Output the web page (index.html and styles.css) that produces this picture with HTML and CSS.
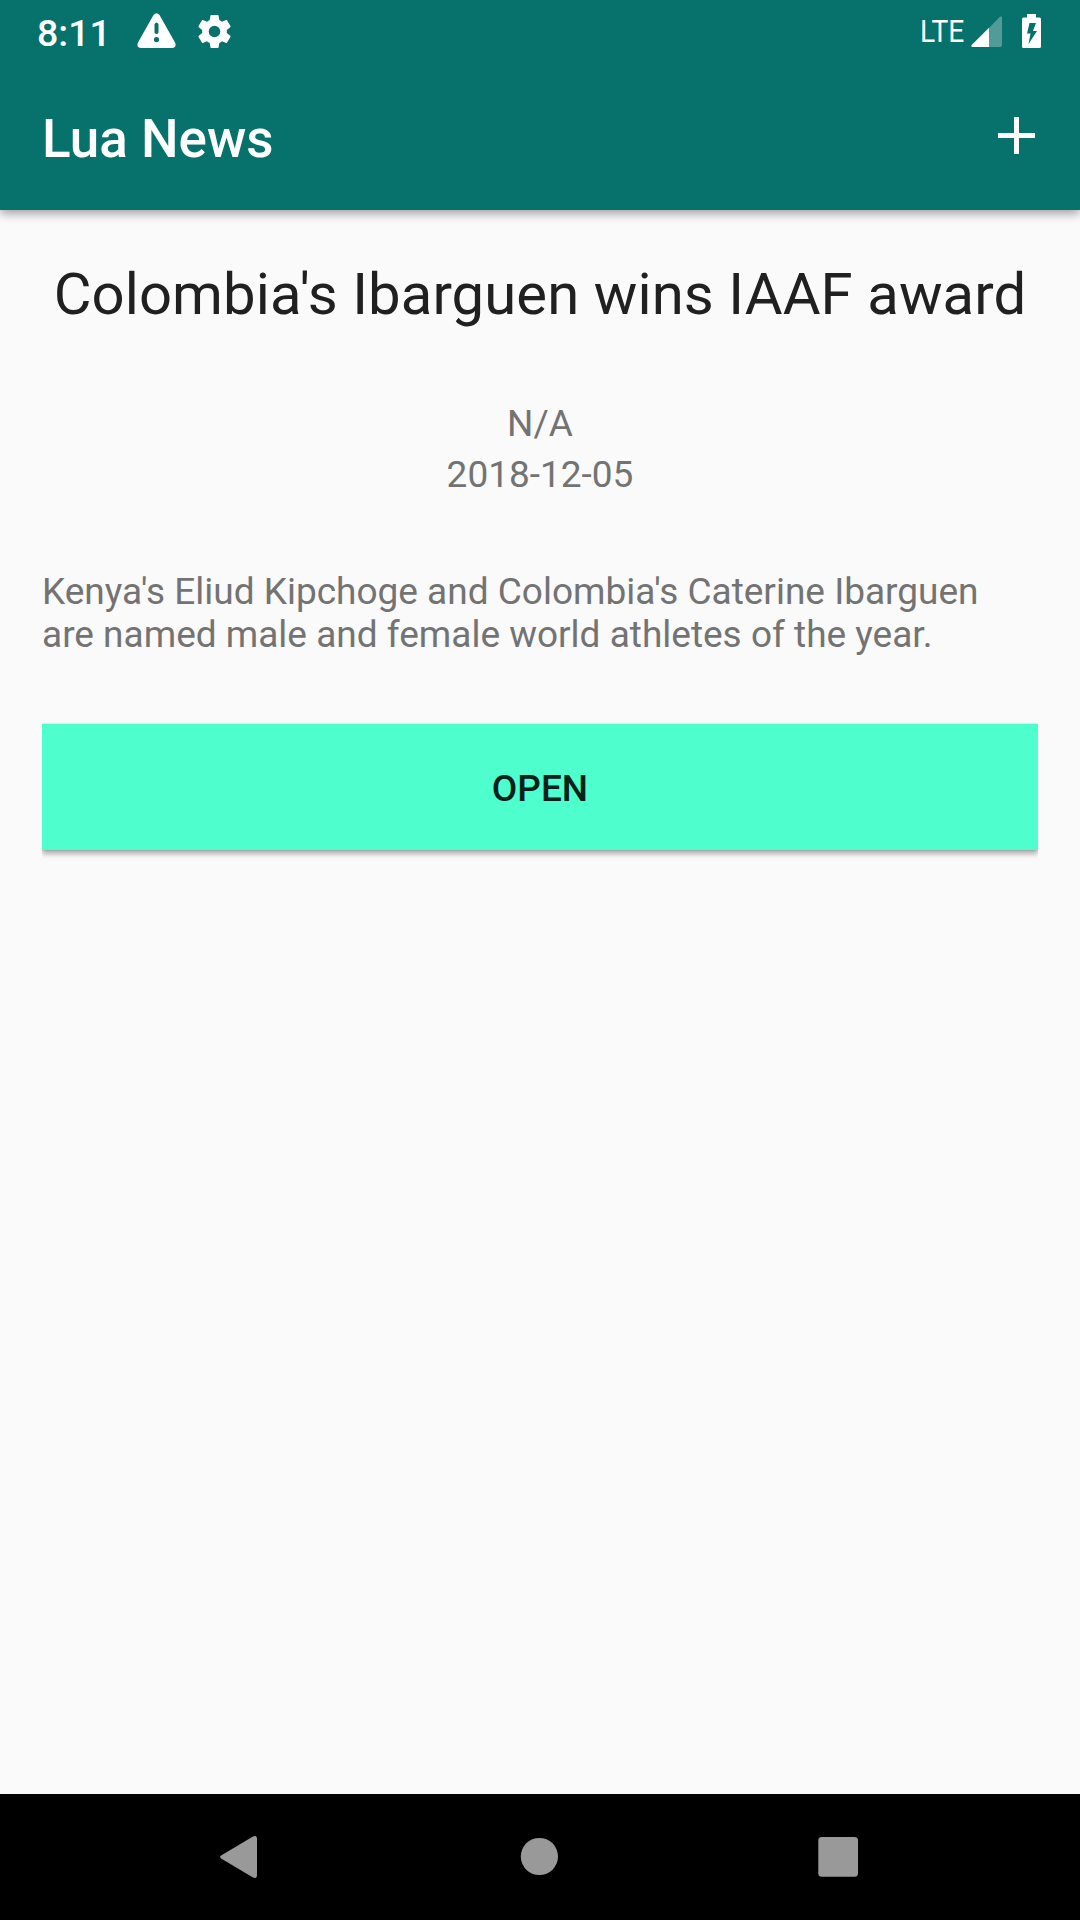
FILE: index.html
```html
<!DOCTYPE html>
<html lang="en">
<head>
<meta charset="utf-8">
<title>Lua News</title>
<link rel="stylesheet" href="styles.css">
</head>
<body>
<header class="top">
  <div class="status">
    <span class="clock">8:11</span>
    <svg class="warn" viewBox="0 0 39 35"><path fill="#fff" fill-rule="evenodd" d="M16.500 2Q19.500-1.500 22.500 2L38 29.500Q40 34.500 35 35H4Q-1 34.500 1 29.500ZM17.500 11V19.500Q19.500 22.500 21.500 19.500V11Q19.500 8 17.500 11ZM19.500 24A2.600 2.600 0 1 0 19.500 29.200A2.600 2.600 0 1 0 19.500 24Z"/></svg>
    <svg class="gear" viewBox="2 2 20 20"><path fill="#fff" d="M19.430 12.980c.040-.320.070-.640.070-.980s-.030-.660-.070-.980l2.110-1.650c.190-.150.240-.420.120-.640l-2-3.460c-.120-.220-.390-.300-.610-.220l-2.490 1c-.520-.400-1.080-.730-1.690-.980l-.380-2.650C14.460 2.180 14.250 2 14 2h-4c-.250 0-.460.180-.490.420l-.380 2.650c-.610.250-1.170.590-1.690.980l-2.490-1c-.230-.090-.490 0-.610.220l-2 3.460c-.130.220-.070.490.120.640l2.110 1.650c-.040.320-.070.650-.070.980s.030.660.070.980l-2.110 1.650c-.190.150-.240.420-.120.640l2 3.460c.120.220.390.300.610.220l2.490-1c.520.400 1.080.730 1.690.980l.380 2.650c.030.240.240.420.490.420h4c.250 0 .460-.180.490-.420l.380-2.650c.610-.250 1.170-.590 1.690-.980l2.490 1c.230.090.490 0 .610-.220l2-3.460c.120-.220.070-.490-.120-.640zM12 15.500A3.500 3.500 0 1 1 12 8.500a3.500 3.500 0 0 1 0 7z"/></svg>
    <span class="network">LTE</span>
    <svg class="signal" viewBox="0 0 31 31"><path fill="#fff" fill-opacity=".3" d="M18 12 29 .7Q31-.5 31 2V29Q31 31 29 31H18Z"/><path fill="#fff" d="M.7 29 18 11.700V31H1.500Q-.5 31 .7 29Z"/></svg>
    <svg class="battery" viewBox="0 0 19 34"><path fill="#fff" fill-rule="evenodd" d="M5 0H14V3.500H17.500Q19 3.500 19 5V32.500Q19 34 17.500 34H1.500Q0 34 0 32.500V5Q0 3.500 1.500 3.500H5ZM7.500 9 5 19.500H8.500L6.500 30 15 17H11L14 9Z"/></svg>
  </div>
  <div class="appbar">
    <h1 class="brand">Lua News</h1>
    <svg class="plus" viewBox="0 0 37 37"><path d="M18.500 0V37M0 18.500H37" stroke="#fff" stroke-width="5"/></svg>
  </div>
</header>
<main class="article">
  <h2 class="headline">Colombia's Ibarguen wins IAAF award</h2>
  <p class="meta">N/A</p>
  <p class="meta">2018-12-05</p>
  <p class="summary">Kenya's Eliud Kipchoge and Colombia's Caterine Ibarguen<br>are named male and female world athletes of the year.</p>
  <button class="open">OPEN</button>
</main>
<nav class="nav">
  <svg viewBox="0 0 44 44"><path fill="#999" d="M1.500 20.300 33 1.500Q37-.2 37 4V40Q37 44.200 33 42.500L1.500 23.700Q-1.300 22 1.500 20.300Z"/></svg>
  <svg viewBox="0 0 44 44"><circle cx="21.400" cy="21.500" r="18.600" fill="#999"/></svg>
  <svg viewBox="0 0 44 44"><rect x="2.300" y="2" width="39.700" height="39.700" rx="3.500" fill="#999"/></svg>
</nav>
</body>
</html>
```
FILE: styles.css
```css
* { box-sizing: border-box; margin: 0; padding: 0; }
body { width: 1080px; height: 1920px; display: flex; flex-direction: column; background: #fafafa; font-family: Roboto, sans-serif; overflow: hidden; }
svg { display: block; flex: none; }
.top { height: 210px; background: #07716c; color: #fff; box-shadow: 0 3px 10px rgba(0,0,0,.4); }
.status { height: 63px; display: flex; align-items: center; padding: 0 39px 0 37px; }
.clock { width: 100px; font-size: 37.500px; font-weight: 500; padding-top: 3px; }
.warn { width: 39px; height: 35px; margin-bottom: 3px; }
.gear { width: 33px; height: 33px; margin-left: 22px; }
.network { margin-left: auto; margin-bottom: 2px; font-size: 32px; transform: scaleX(.88); transform-origin: right; }
.signal { width: 31px; height: 31px; margin-left: 7px; }
.battery { width: 19px; height: 34px; margin-left: 20px; margin-bottom: 1px; }
.appbar { height: 147px; display: flex; align-items: center; justify-content: space-between; padding: 0 45px 0 42px; }
.brand { font-size: 53px; font-weight: 500; padding-top: 4px; }
.plus { width: 37px; height: 37px; margin-bottom: 2px; }
.article { flex: 1; padding: 42px; display: flex; flex-direction: column; }
.headline { font-size: 58px; letter-spacing: .1px; line-height: 84px; font-weight: 400; color: #202020; text-align: center; white-space: nowrap; }
.meta { font-size: 37px; line-height: 51px; color: #737373; text-align: center; }
.headline + .meta { margin-top: 62px; }
.summary { font-size: 37px; line-height: 43px; color: #737373; margin-top: 70px; white-space: nowrap; }
.open { height: 126px; margin-top: 68px; padding-top: 2px; border: 0; background: #4effcd; color: #08221a; font: 500 37px Roboto, sans-serif; box-shadow: 0 4px 5px rgba(0,0,0,.3), 0 0 2px rgba(0,0,0,.2); clip-path: inset(-3px 0 -10px 0); }
.nav { height: 126px; background: #000; display: flex; align-items: center; justify-content: space-between; padding: 0 220px; }
.nav svg { width: 44px; height: 44px; }
```
